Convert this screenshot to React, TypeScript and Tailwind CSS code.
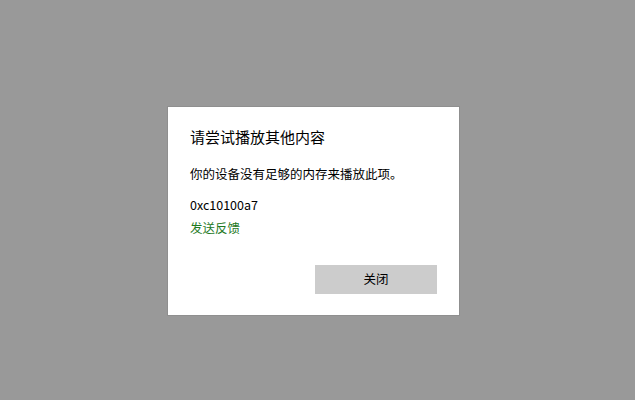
const FONT = {
  fontFamily: '"Noto Sans CJK SC", "Noto Sans", sans-serif',
};

export default function App() {
  return (
    <div
      className="h-[400px] w-[635px] bg-[#999999] pl-[167px] pt-[106px]"
      style={FONT}
    >
      {/* 对话框 */}
      <div className="flex h-[210px] w-[293px] flex-col border border-[#8f8f8f] bg-white pb-[21px] pl-[22px] pr-[22px] text-black">
        <h1 className="mt-[20px] text-[15px] leading-[20px]">请尝试播放其他内容</h1>
        <p className="mt-[17px] text-[12.5px] leading-[20px]">
          你的设备没有足够的内存来播放此项。
        </p>
        <p className="mt-[11px] text-[12.5px] leading-[20px]">0xc10100a7</p>
        <a href="#" className="mt-[3px] text-[12.5px] leading-[20px] text-[#1f7a1f]">
          发送反馈
        </a>
        <div className="mt-auto flex justify-end">
          <button
            type="button"
            className="h-[29px] w-[122px] bg-[#cccccc] text-[12.5px] text-black"
          >
            关闭
          </button>
        </div>
      </div>
    </div>
  );
}
